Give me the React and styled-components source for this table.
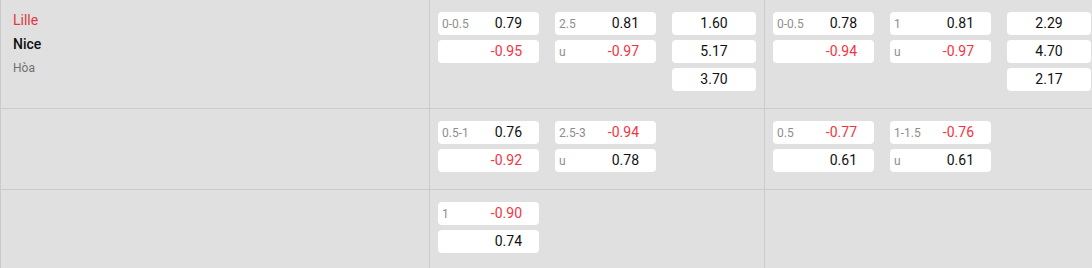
import React from "react";
import styled, { createGlobalStyle } from "styled-components";

const Global = createGlobalStyle`
  html, body { margin: 0; padding: 0; background: #e0e0e0; }
  body { font-family: Roboto, "Liberation Sans", Arial, sans-serif; }
  * { box-sizing: border-box; }
`;

const Table = styled.div`
  width: 1092px;
  background: #e0e0e0;
`;

const Row = styled.div`
  display: grid;
  grid-template-columns: 430px 335px 1fr;
  border-bottom: 1px solid #cacaca;
`;

const TeamCell = styled.div`
  border-left: 1px solid #cacaca;
  border-right: 1px solid #cacaca;
  padding: 8px 12px;
  display: flex;
  flex-direction: column;
`;

const Team = styled.div`
  font-size: 14px;
  line-height: 24px;
  color: ${(p) => p.$color};
  font-weight: ${(p) => (p.$bold ? 500 : 400)};
`;

const Draw = styled.div`
  font-size: 12px;
  line-height: 24px;
  color: #707070;
`;

const OddsCell = styled.div`
  border-right: ${(p) => (p.$last ? "none" : "1px solid #cacaca")};
  padding: 12px 8px;
  display: flex;
  gap: 16px;
  align-items: flex-start;
`;

const Group = styled.div`
  width: ${(p) => (p.$narrow ? 84 : 101)}px;
  display: flex;
  flex-direction: column;
`;

const Box = styled.div`
  height: 23px;
  margin-bottom: 5px;
  background: #fff;
  border-radius: 4px;
  display: flex;
  align-items: center;
  justify-content: ${(p) => (p.$center ? "center" : "space-between")};
  padding: ${(p) => (p.$center ? "0" : "0 17px 0 4px")};
`;

const Label = styled.span`
  font-size: 12px;
  color: #8e8e8e;
`;

const Value = styled.span`
  font-size: 14px;
  line-height: 23px;
  color: ${(p) => (p.$neg ? "#f5333f" : "#111")};
`;

const rows = [
  {
    teams: true,
    cells: [
      {
        hdp: [["0-0.5", "0.79"], ["", "-0.95"]],
        ou: [["2.5", "0.81"], ["u", "-0.97"]],
        x12: ["1.60", "5.17", "3.70"],
      },
      {
        hdp: [["0-0.5", "0.78"], ["", "-0.94"]],
        ou: [["1", "0.81"], ["u", "-0.97"]],
        x12: ["2.29", "4.70", "2.17"],
      },
    ],
  },
  {
    cells: [
      {
        hdp: [["0.5-1", "0.76"], ["", "-0.92"]],
        ou: [["2.5-3", "-0.94"], ["u", "0.78"]],
      },
      {
        hdp: [["0.5", "-0.77"], ["", "0.61"]],
        ou: [["1-1.5", "-0.76"], ["u", "0.61"]],
      },
    ],
  },
  {
    cells: [{ hdp: [["1", "-0.90"], ["", "0.74"]] }, {}],
  },
];

const PairGroup = ({ items }) => (
  <Group>
    {items.map(([label, value], i) => (
      <Box key={i}>
        <Label>{label}</Label>
        <Value $neg={value.startsWith("-")}>{value}</Value>
      </Box>
    ))}
  </Group>
);

const Cell = ({ data, last }) => (
  <OddsCell $last={last}>
    {data.hdp && <PairGroup items={data.hdp} />}
    {data.ou && <PairGroup items={data.ou} />}
    {data.x12 && (
      <Group $narrow>
        {data.x12.map((v, i) => (
          <Box key={i} $center>
            <Value $neg={v.startsWith("-")}>{v}</Value>
          </Box>
        ))}
      </Group>
    )}
  </OddsCell>
);

export default function App() {
  return (
    <>
      <Global />
      <Table>
        {rows.map((row, i) => (
          <Row key={i}>
            <TeamCell>
              {row.teams && (
                <>
                  <Team $color="#e0393e">Lille</Team>
                  <Team $color="#111" $bold>
                    Nice
                  </Team>
                  <Draw>Hòa</Draw>
                </>
              )}
            </TeamCell>
            <Cell data={row.cells[0]} />
            <Cell data={row.cells[1]} last />
          </Row>
        ))}
      </Table>
    </>
  );
}
